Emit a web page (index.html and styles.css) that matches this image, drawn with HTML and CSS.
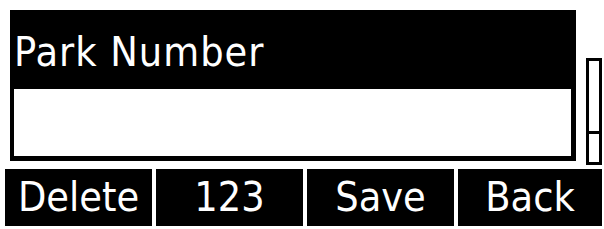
FILE: index.html
```html
<!DOCTYPE html>
<html>
<head>
<meta charset="utf-8">
<link rel="stylesheet" href="styles.css">
</head>
<body>
<div class="screen">
  <div class="top">
    <div class="panel">
      <div class="title">Park Number</div>
      <div class="input"></div>
    </div>
    <div class="scroll">
      <div class="thumb"></div>
    </div>
  </div>
  <div class="keys">
    <div class="key">Delete</div>
    <div class="key">123</div>
    <div class="key">Save</div>
    <div class="key">Back</div>
  </div>
</div>
</body>
</html>
```
FILE: styles.css
```css
html, body {
  margin: 0;
  padding: 0;
  background: #fff;
}
.screen {
  width: 604px;
  height: 229px;
  font-family: "DejaVu Sans Condensed", "DejaVu Sans", sans-serif;
  font-stretch: condensed;
  color: #fff;
}
.top {
  display: flex;
  padding-top: 10px;
  height: 151px;
}
.panel {
  margin-left: 10px;
  width: 566px;
  background: #000;
  display: flex;
  flex-direction: column;
  padding: 0 5px 5px 4px;
  box-sizing: border-box;
}
.title {
  height: 79px;
  box-sizing: border-box;
  font-size: 41px;
  line-height: 1;
  letter-spacing: 1px;
  padding-top: 22px;
  white-space: nowrap;
}
.input {
  flex: 1;
  background: #fff;
}
.scroll {
  margin-left: 10px;
  margin-top: 48px;
  width: 16px;
  height: 107px;
  border: 3px solid #000;
  box-sizing: border-box;
  display: flex;
  flex-direction: column;
}
.thumb {
  margin-top: 70px;
  height: 3px;
  background: #000;
}
.keys {
  display: flex;
  gap: 4px;
  padding-left: 5px;
  margin-top: 8px;
}
.key {
  width: 147px;
  height: 57px;
  background: #000;
  font-size: 41px;
  line-height: 57px;
  text-align: center;
  white-space: nowrap;
}
.key:last-child {
  width: 144px;
}
```
